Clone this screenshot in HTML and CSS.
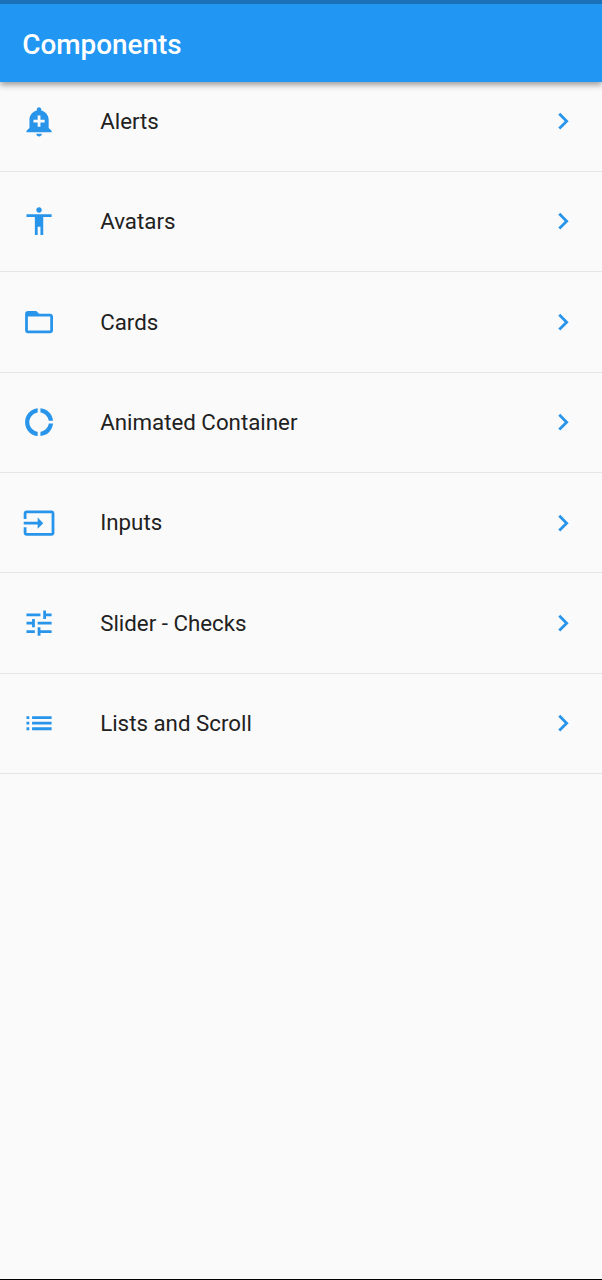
FILE: index.html
```html
<!DOCTYPE html>
<html lang="en">
<head>
<meta charset="utf-8">
<title>Components</title>
<link rel="stylesheet" href="styles.css">
</head>
<body>
<svg class="sprite" width="0" height="0">
  <symbol id="chevron" viewBox="0 0 24 24"><path d="M10 6 8.590 7.410 13.170 12l-4.580 4.590L10 18l6-6z"/></symbol>
</svg>
<div class="screen">
  <header class="app-bar"><h1 class="title">Components</h1></header>
  <ul class="list">
    <li class="row">
      <svg class="icon" viewBox="0 0 24 24"><path d="M10.010 21.010c0 1.100.890 1.990 1.990 1.990s1.990-.890 1.990-1.990h-3.980zm8.870-4.190V11c0-3.250-2.250-5.970-5.290-6.690v-.720C13.590 2.710 12.880 2 12 2s-1.590.710-1.590 1.590v.720C7.370 5.030 5.120 7.750 5.120 11v5.820L3 18.940V20h18v-1.060l-2.120-2.120zM16 13.010h-3v3h-2v-3H8V11h3V8h2v3h3v2.010z"/></svg>
      <span class="label">Alerts</span><svg class="icon"><use href="#chevron"/></svg>
    </li>
    <li class="row">
      <svg class="icon" viewBox="0 0 24 24"><path d="M12 2c1.100 0 2 .9 2 2s-.9 2-2 2-2-.9-2-2 .9-2 2-2zm9 7h-6v13h-2v-6h-2v6H9V9H3V7h18v2z"/></svg>
      <span class="label">Avatars</span><svg class="icon"><use href="#chevron"/></svg>
    </li>
    <li class="row">
      <svg class="icon" viewBox="0 0 24 24"><path d="M20 6h-8l-2-2H4c-1.100 0-1.990.9-1.990 2L2 18c0 1.100.9 2 2 2h16c1.100 0 2-.9 2-2V8c0-1.100-.9-2-2-2zm0 12H4V8h16v10z"/></svg>
      <span class="label">Cards</span><svg class="icon"><use href="#chevron"/></svg>
    </li>
    <li class="row">
      <svg class="icon" viewBox="0 0 24 24"><path d="M11 5.080V2c-5 .5-9 4.810-9 10s4 9.500 9 10v-3.080c-3-.480-6-3.400-6-6.920s3-6.440 6-6.920zM18.970 11H22c-.470-5-4-8.530-9-9v3.080C16 5.510 18.540 8 18.970 11zM13 18.920V22c5-.470 8.530-4 9-9h-3.030c-.430 3-2.970 5.490-5.970 5.920z"/></svg>
      <span class="label">Animated Container</span><svg class="icon"><use href="#chevron"/></svg>
    </li>
    <li class="row">
      <svg class="icon" viewBox="0 0 24 24"><path d="M21 3.010H3c-1.100 0-2 .9-2 2V9h2V4.990h18v14.030H3V15H1v4.010c0 1.100.9 1.980 2 1.980h18c1.100 0 2-.880 2-1.980v-14c0-1.110-.9-2-2-2zM11 16l4-4-4-4v3H1v2h10v3z"/></svg>
      <span class="label">Inputs</span><svg class="icon"><use href="#chevron"/></svg>
    </li>
    <li class="row">
      <svg class="icon" viewBox="0 0 24 24"><path d="M3 17v2h6v-2H3zM3 5v2h10V5H3zm10 16v-2h8v-2h-8v-2h-2v6h2zM7 9v2H3v2h4v2h2V9H7zm14 4v-2H11v2h10zm-6-4h2V7h4V5h-4V3h-2v6z"/></svg>
      <span class="label">Slider - Checks</span><svg class="icon"><use href="#chevron"/></svg>
    </li>
    <li class="row">
      <svg class="icon" viewBox="0 0 24 24"><path d="M3 13h2v-2H3v2zm0 4h2v-2H3v2zm0-8h2V7H3v2zm4 4h14v-2H7v2zm0 4h14v-2H7v2zM7 7v2h14V7H7z"/></svg>
      <span class="label">Lists and Scroll</span><svg class="icon"><use href="#chevron"/></svg>
    </li>
  </ul>
</div>
</body>
</html>
```
FILE: styles.css
```css
body {
  margin: 0;
  font-family: Roboto, "Noto Sans", sans-serif;
  color: #212121;
}

.sprite {
  display: none;
}

.screen {
  box-sizing: border-box;
  height: 1280px;
  overflow: hidden;
  background: #fafafa;
  border-top: 4px solid #1a71b8;
  border-bottom: 1px solid #000;
}

.app-bar {
  display: flex;
  align-items: center;
  height: 78px;
  padding: 0 22.2px;
  background: #2196f3;
  box-shadow: 0 3px 6px rgba(0, 0, 0, .38);
  position: relative;
  z-index: 1;
}

.title {
  margin: 0;
  padding-top: 3px;
  font-size: 27.9px;
  line-height: 34px;
  font-weight: 500;
  color: #fff;
}

.list {
  margin: -0.25px 0 0;
  padding: 0;
  list-style: none;
}

.row {
  display: flex;
  align-items: center;
  box-sizing: border-box;
  height: 78.1px;
  margin-bottom: 22.3px;
  padding: 0 22.3px;
  position: relative;
}

.row::after {
  content: "";
  position: absolute;
  left: 0;
  right: 0;
  bottom: -12px;
  height: 1px;
  background: #e5e5e5;
}

.icon {
  flex: none;
  width: 33.5px;
  height: 33.5px;
  fill: #2894ea;
  transform: translate(.3px, .4px);
}

.label {
  flex: 1;
  padding-left: 44.4px;
  font-size: 22.3px;
  line-height: 28px;
}
```
